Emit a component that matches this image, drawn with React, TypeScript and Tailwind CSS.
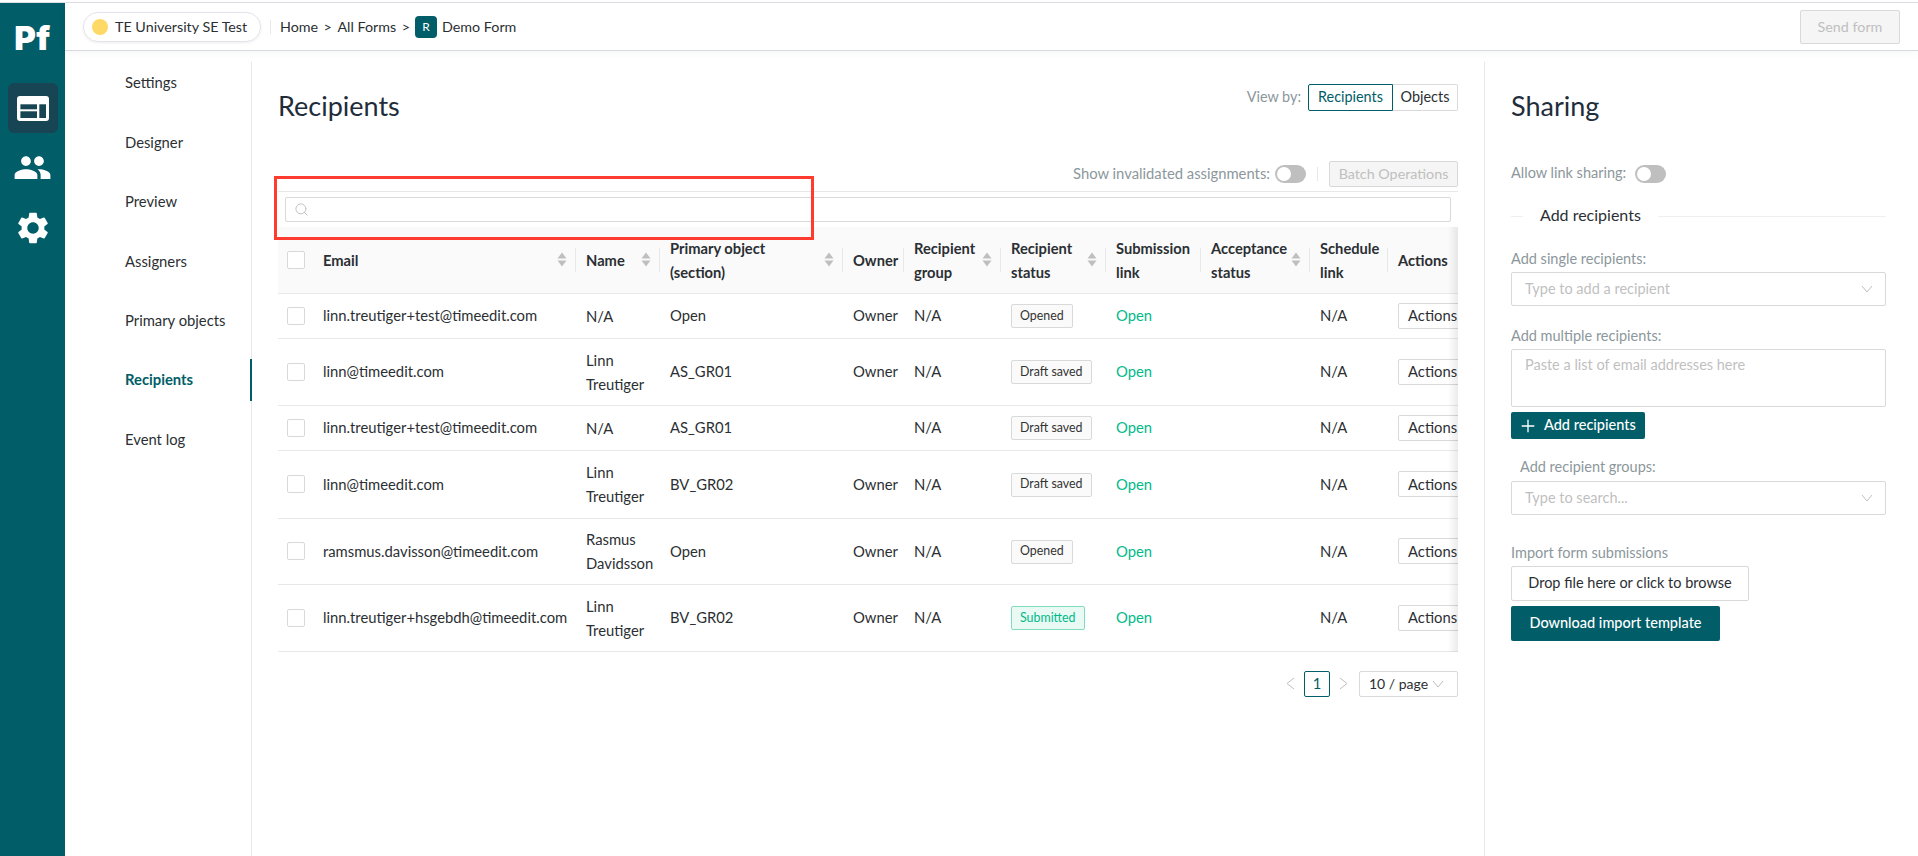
import { Plus, Search } from 'lucide-react';
import { MdPeople, MdSettings } from 'react-icons/md';

const navItems = ['Settings', 'Designer', 'Preview', 'Assigners', 'Primary objects', 'Recipients', 'Event log'];

type Row = {
  email: string;
  name: string[];
  object: string;
  owner: string;
  status: 'Opened' | 'Draft saved' | 'Submitted';
  height: string;
};

const rows: Row[] = [
  { email: 'linn.treutiger+test@timeedit.com', name: ['N/A'], object: 'Open', owner: 'Owner', status: 'Opened', height: 'h-[45px]' },
  { email: 'linn@timeedit.com', name: ['Linn', 'Treutiger'], object: 'AS_GR01', owner: 'Owner', status: 'Draft saved', height: 'h-[67px]' },
  { email: 'linn.treutiger+test@timeedit.com', name: ['N/A'], object: 'AS_GR01', owner: '', status: 'Draft saved', height: 'h-[45px]' },
  { email: 'linn@timeedit.com', name: ['Linn', 'Treutiger'], object: 'BV_GR02', owner: 'Owner', status: 'Draft saved', height: 'h-[68px]' },
  { email: 'ramsmus.davisson@timeedit.com', name: ['Rasmus', 'Davidsson'], object: 'Open', owner: 'Owner', status: 'Opened', height: 'h-[66px]' },
  { email: 'linn.treutiger+hsgebdh@timeedit.com', name: ['Linn', 'Treutiger'], object: 'BV_GR02', owner: 'Owner', status: 'Submitted', height: 'h-[67px]' },
];

const columns = [
  { label: [] as string[], width: 'w-[35px]', sort: false },
  { label: ['Email'], width: 'w-[263px]', sort: true },
  { label: ['Name'], width: 'w-[84px]', sort: true },
  { label: ['Primary object', '(section)'], width: 'w-[183px]', sort: true },
  { label: ['Owner'], width: 'w-[61px]', sort: false },
  { label: ['Recipient', 'group'], width: 'w-[97px]', sort: true },
  { label: ['Recipient', 'status'], width: 'w-[105px]', sort: true },
  { label: ['Submission', 'link'], width: 'w-[95px]', sort: false },
  { label: ['Acceptance', 'status'], width: 'w-[109px]', sort: true },
  { label: ['Schedule', 'link'], width: 'w-[78px]', sort: false },
  { label: ['Actions'], width: 'w-[70px]', sort: false },
];

function Checkbox() {
  return <div className="h-[18px] w-[18px] rounded-[2px] border border-[#d9d9d9] bg-white" />;
}

function Toggle() {
  return (
    <div className="flex h-[18px] w-[31px] items-center rounded-full bg-[#bfbfbf] pl-[2px]">
      <div className="h-[14px] w-[14px] rounded-full bg-white" />
    </div>
  );
}

function SortCaret() {
  return (
    <svg width="10" height="15" viewBox="0 0 10 15" className="shrink-0" fill="#bfbfbf">
      <path d="M5 0.5 9.5 6.5H0.5Z" />
      <path d="M5 14.5 9.5 8.5H0.5Z" />
    </svg>
  );
}

function DownArrow() {
  return (
    <svg width="12" height="8" viewBox="0 0 12 8" fill="none" stroke="#bfbfbf" strokeWidth="1">
      <path d="M1 1 6 7 11 1" />
    </svg>
  );
}

function PageArrow({ direction }: { direction: 'left' | 'right' }) {
  return (
    <svg width="9" height="13" viewBox="0 0 9 13" fill="none" stroke="#bfbfbf" strokeWidth="1">
      <path d={direction === 'left' ? 'M8 1 1 6.5 8 12' : 'M1 1 8 6.5 1 12'} />
    </svg>
  );
}

function StatusTag({ status }: { status: Row['status'] }) {
  if (status === 'Submitted') {
    return (
      <span className="inline-flex h-[24px] items-center rounded-[2px] border border-[#80dcc0] bg-[#e9f9f3] px-[8px] text-[12.4px] text-[#00b98a]">
        {status}
      </span>
    );
  }
  return (
    <span className="inline-flex h-[24px] items-center rounded-[2px] border border-[#d9d9d9] bg-[#fafafa] px-[8px] text-[12.4px] text-[#333]">
      {status}
    </span>
  );
}

function SelectBox({ placeholder }: { placeholder: string }) {
  return (
    <div className="flex h-[34px] items-center justify-between rounded-[2px] border border-[#d9d9d9] pl-[13px] pr-[12px] text-[#bfbfbf]">
      <span>{placeholder}</span>
      <DownArrow />
    </div>
  );
}

function FieldLabel({ text, className }: { text: string; className: string }) {
  return <div className={`h-[22px] leading-[20px] text-[#8c979c] ${className}`}>{text}</div>;
}

export default function App() {
  return (
    <div className="relative flex h-[856px] w-[1918px] flex-col overflow-hidden bg-white font-[family-name:Lato,sans-serif] text-[14.8px] text-[#2b2f33]">
      <div className="h-[3px] border-b border-[#dcdfe4]" />
      <div className="flex min-h-0 flex-1">
        <aside className="flex w-[65px] shrink-0 flex-col items-center bg-[#015d67] text-white">
          <div className="flex h-[80px] items-center pb-[8px] font-[family-name:Inter,sans-serif] text-[33px] font-black tracking-[0.5px]">Pf</div>
          <div className="flex h-[50px] w-[50px] items-center justify-center rounded-[6px] bg-[#174553]">
            <svg width="32" height="25" viewBox="0 0 32 25">
              <rect width="32" height="25" rx="3" fill="#fff" />
              <rect x="3.4" y="8.3" width="16.6" height="5" fill="#174553" />
              <rect x="3.4" y="15.3" width="16.6" height="6.7" fill="#174553" />
              <rect x="22.3" y="8.3" width="6.7" height="13.7" fill="#174553" />
            </svg>
          </div>
          <MdPeople className="mt-[15px]" size={39} />
          <MdSettings className="mt-[22px]" size={38} />
        </aside>

        <div className="flex min-w-0 flex-1 flex-col">
          <header className="flex h-[48px] shrink-0 items-center border-b border-[#d5dae0] pl-[18px] pr-[18px] text-[14.3px] shadow-[0_2px_8px_rgba(0,0,0,0.04)]">
            <div className="flex h-[30px] w-[178px] items-center gap-[7px] rounded-full border border-[#e2e4ea] pl-[8px] shadow-[0_1px_3px_rgba(0,0,0,0.08)]">
              <div className="h-[16px] w-[16px] rounded-full bg-[#ffd966]" />
              <span>TE University SE Test</span>
            </div>
            <div className="ml-[9px] h-[14px] w-px bg-[#e8e8e8]" />
            <nav className="ml-[9px] flex items-center">
              <span>Home</span>
              <span className="mx-[5.5px]">&gt;</span>
              <span>All Forms</span>
              <span className="ml-[5.5px] mr-[5px]">&gt;</span>
              <span className="flex h-[22px] w-[22px] items-center justify-center rounded-[4px] bg-[#015d67] text-[12px] text-white">R</span>
              <span className="ml-[5px]">Demo Form</span>
            </nav>
            <button className="ml-auto h-[34px] w-[100px] rounded-[2px] border border-[#d9d9d9] bg-[#f5f5f5] text-[#bfbfbf]">Send form</button>
          </header>

          <div className="flex min-h-0 flex-1 pt-[11px]">
            <nav className="flex w-[187px] shrink-0 flex-col gap-[17.4px] border-r border-[#e8e8e8]">
              {navItems.map((item) => (
                <div
                  key={item}
                  className={
                    item === 'Recipients'
                      ? 'relative -mr-px flex h-[42px] items-center border-r-2 border-[#015d67] pb-px pl-[60px] font-bold text-[#015d67]'
                      : 'flex h-[42px] items-center pb-px pl-[60px]'
                  }
                >
                  {item}
                </div>
              ))}
            </nav>

            <main className="w-[1233px] shrink-0 border-r border-[#e8e8e8] pl-[26px] pr-[26px] pt-[22px]">
              <div className="flex items-start justify-between">
                <h1 className="mt-[2px] mb-px text-[27px] leading-[40px] text-[#1f2d3a]">Recipients</h1>
                <div className="flex items-center gap-[7px] text-[14.4px]">
                  <span className="pb-[2px] text-[#8c979c]">View by:</span>
                  <div className="flex h-[27px]">
                    <div className="flex w-[85px] items-center justify-center rounded-l-[2px] border border-[#015d67] pb-[2px] text-[#015d67]">Recipients</div>
                    <div className="flex w-[65px] items-center justify-center rounded-r-[2px] border border-l-0 border-[#d9d9d9] pb-[2px]">Objects</div>
                  </div>
                </div>
              </div>

              <div className="mt-[34px] flex h-[26px] items-center justify-end">
                <span className="pb-px text-[#8c979c]">Show invalidated assignments:</span>
                <div className="ml-[5px]">
                  <Toggle />
                </div>
                <div className="ml-[11px] mr-[11px] h-[14px] w-px bg-[#e8e8e8]" />
                <button className="h-[26px] w-[129px] rounded-[2px] border border-[#d9d9d9] bg-[#f5f5f5] pb-px text-[14.3px] text-[#bfbfbf]">Batch Operations</button>
              </div>

              <div className="mt-[4px] border-t border-[#e8e8e8] px-[7px] py-[5px]">
                <div className="flex h-[25px] items-center rounded-[2px] border border-[#d9d9d9] pl-[8px]">
                  <Search className="h-[15px] w-[15px] text-[#bfbfbf]" strokeWidth={1.5} />
                </div>
              </div>

              <div className="relative overflow-hidden">
                <table className="w-[1180px] table-fixed border-collapse">
                  <colgroup>
                    {columns.map((column, i) => (
                      <col key={i} className={column.width} />
                    ))}
                  </colgroup>
                  <thead>
                    <tr className="h-[66px] bg-[#fafafa] text-left">
                      {columns.map((column, i) => (
                        <th
                          key={i}
                          className={
                            i === 0
                              ? 'border-b border-[#e8e8e8] pl-[9px]'
                              : i === columns.length - 1
                                ? 'border-b border-[#e8e8e8] font-bold'
                                : "relative border-b border-[#e8e8e8] font-bold after:absolute after:right-0 after:top-1/2 after:h-[24px] after:w-px after:-translate-y-1/2 after:bg-[#e8e8e8] after:content-['']"
                          }
                        >
                          {i === 0 ? (
                            <Checkbox />
                          ) : (
                            <div className="flex items-center justify-between pl-[10px] pr-[9px] text-[14.7px] leading-[24px]">
                              <div>
                                {column.label.map((line) => (
                                  <div key={line} className="whitespace-nowrap">{line}</div>
                                ))}
                              </div>
                              {column.sort && <SortCaret />}
                            </div>
                          )}
                        </th>
                      ))}
                    </tr>
                  </thead>
                  <tbody>
                    {rows.map((row, i) => (
                      <tr key={i} className={`${row.height} border-b border-[#e8e8e8]`}>
                        <td className="pl-[9px]">
                          <Checkbox />
                        </td>
                        <td className="whitespace-nowrap pl-[10px]">{row.email}</td>
                        <td className="pl-[10px] leading-[24px]">
                          {row.name.map((line) => (
                            <div key={line} className="whitespace-nowrap">{line}</div>
                          ))}
                        </td>
                        <td className="pl-[10px]">{row.object}</td>
                        <td className="pl-[10px]">{row.owner}</td>
                        <td className="pl-[10px]">N/A</td>
                        <td className="pl-[10px]">
                          <StatusTag status={row.status} />
                        </td>
                        <td className="pl-[10px] text-[#00ba8a]">Open</td>
                        <td />
                        <td className="pl-[10px]">N/A</td>
                        <td className="overflow-hidden pl-[10px]">
                          <div className="flex h-[26px] w-[80px] items-center rounded-[2px] border border-[#d9d9d9] pl-[9px]">Actions</div>
                        </td>
                      </tr>
                    ))}
                  </tbody>
                </table>
                <div className="pointer-events-none absolute bottom-0 right-0 top-0 w-[10px] bg-gradient-to-r from-transparent to-[#00000014]" />
              </div>

              <div className="mt-[19px] flex items-center justify-end">
                <PageArrow direction="left" />
                <div className="ml-[9px] flex h-[26px] w-[26px] items-center justify-center rounded-[2px] border border-[#015d67] text-[#015d67]">1</div>
                <div className="ml-[9px]">
                  <PageArrow direction="right" />
                </div>
                <div className="ml-[11px] flex h-[26px] w-[99px] items-center justify-between rounded-[2px] border border-[#d9d9d9] pl-[9px] pr-[13px] text-[14px]">
                  <span>10 / page</span>
                  <DownArrow />
                </div>
              </div>
            </main>

            <section className="flex-1 pl-[26px] pr-[32px] pt-[25px] text-[14.5px]">
              <h2 className="-mt-px text-[27px] leading-[40px] text-[#1f2d3a]">Sharing</h2>
              <div className="mt-[39px] flex h-[18px] items-center gap-[9px]">
                <span className="pb-[2px] text-[#8c979c]">Allow link sharing:</span>
                <Toggle />
              </div>
              <div className="mt-[21px] flex h-[24px] items-center">
                <div className="h-px w-[12px] bg-[#efefef]" />
                <span className="mx-[17px] pb-[2px] text-[16px] text-[#2b2f33]">Add recipients</span>
                <div className="h-px flex-1 bg-[#efefef]" />
              </div>
              <FieldLabel text="Add single recipients:" className="mt-[21px] mb-px" />
              <SelectBox placeholder="Type to add a recipient" />
              <FieldLabel text="Add multiple recipients:" className="mt-[20px] mb-px" />
              <div className="h-[58px] rounded-[2px] border border-[#d9d9d9] pl-[13px] pt-[4px] text-[#bfbfbf]">Paste a list of email addresses here</div>
              <button className="mt-[5px] flex h-[27px] w-[134px] items-center rounded-[2px] bg-[#015d67] pl-[7px] font-medium text-white">
                <Plus className="h-[20px] w-[20px]" strokeWidth={1.6} />
                <span className="ml-[6px] pb-px">Add recipients</span>
              </button>
              <FieldLabel text="Add recipient groups:" className="mt-[18px] mb-[2px] ml-[9px]" />
              <SelectBox placeholder="Type to search..." />
              <FieldLabel text="Import form submissions" className="mt-[28px] mb-px" />
              <button className="block h-[35px] w-[238px] rounded-[2px] border border-[#d9d9d9] pb-[2px] text-center">Drop file here or click to browse</button>
              <button className="mt-[5px] block h-[35px] w-[209px] rounded-[2px] bg-[#015d67] pb-[2px] text-center font-medium text-white">Download import template</button>
            </section>
          </div>
        </div>
      </div>

      <div className="absolute left-[274px] top-[176px] h-[64px] w-[540px] border-[3px] border-[#ff3b30]" />
    </div>
  );
}
